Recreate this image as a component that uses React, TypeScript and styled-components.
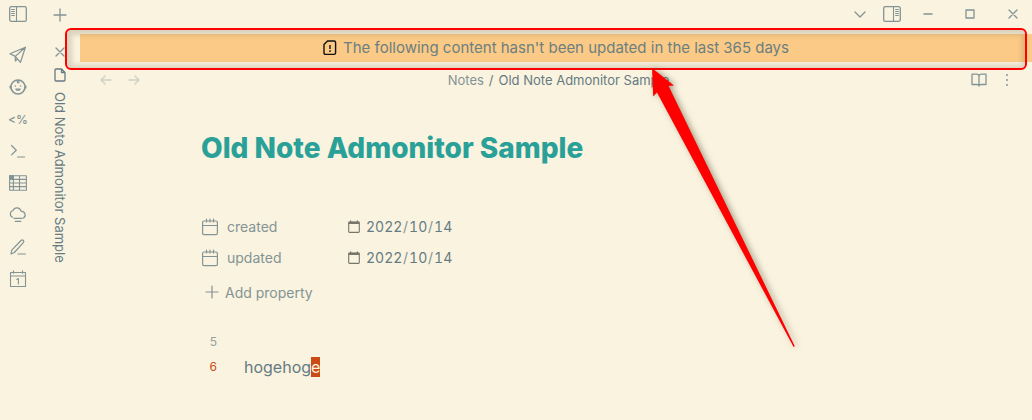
import React from 'react';
import styled, { createGlobalStyle } from 'styled-components';

const GlobalStyle = createGlobalStyle`
  * { box-sizing: border-box; }
  body {
    margin: 0;
    background: #faf3df;
    color: #657b83;
    font-family: Inter, "Liberation Sans", sans-serif;
    font-size: 14px;
  }
`;

const Workspace = styled.div`
  position: relative;
  display: flex;
  min-height: 100vh;
  overflow: hidden;
`;

const Ribbon = styled.aside`
  display: flex;
  flex-direction: column;
  width: 36px;
  flex: none;
`;

const RibbonActions = styled.nav`
  display: flex;
  flex-direction: column;
  padding-top: 11px;
`;

const IconButton = styled.button<{ $w?: number; $h?: number; $faint?: boolean }>`
  display: flex;
  align-items: center;
  justify-content: center;
  flex: none;
  width: ${(p) => p.$w ?? 36}px;
  height: ${(p) => p.$h ?? 32}px;
  padding: 0;
  border: 0;
  background: none;
  color: ${(p) => (p.$faint ? '#d0d0c2' : '#839496')};
  font: 500 12px Inter, "Liberation Sans", sans-serif;
`;

const TabRail = styled.div`
  display: flex;
  flex-direction: column;
  align-items: center;
  flex: none;
  width: 24px;
  margin: 0 8px 0 12px;
`;

const VerticalTab = styled.div`
  display: flex;
  flex-direction: column;
  align-items: center;
  gap: 4px;
  padding-top: 10px;
`;

const VerticalLabel = styled.span`
  writing-mode: vertical-rl;
  font-size: 13px;
  line-height: 16px;
  padding-top: 6px;
  white-space: nowrap;
`;

const Main = styled.main`
  flex: 1;
  min-width: 0;
`;

const WindowBar = styled.header`
  display: flex;
  justify-content: flex-end;
  height: 28px;
`;

const Banner = styled.div`
  display: flex;
  align-items: center;
  justify-content: center;
  gap: 6px;
  height: 28px;
  margin-top: 6px;
  background: #fbca86;
  font-size: 15px;
  line-height: 28px;
  color: #6b7f80;
`;

const ViewHeader = styled.div`
  display: flex;
  align-items: center;
  height: 36px;
  padding: 0 11px 0 12px;
`;

const HeaderSide = styled.div<{ $end?: boolean }>`
  display: flex;
  width: ${(p) => (p.$end ? 68 : 72)}px;
  justify-content: ${(p) => (p.$end ? 'flex-end' : 'flex-start')};
`;

const Breadcrumbs = styled.nav`
  display: flex;
  flex: 1;
  justify-content: center;
  gap: 5px;
  font-size: 13px;
  line-height: 20px;
`;

const Crumb = styled.a`
  color: #839496;
  text-decoration: none;
`;

const Note = styled.article`
  padding: 30px 24px 24px 121px;
`;

const Title = styled.h1`
  margin: 0 0 43px;
  color: #2aa198;
  font-size: 28px;
  line-height: 40px;
  font-weight: 800;
`;

const Property = styled.div`
  display: flex;
  align-items: center;
  height: 31px;
`;

const PropertyName = styled.label`
  display: flex;
  align-items: center;
  gap: 8px;
  width: 147px;
  color: #839496;
`;

const DateField = styled.div`
  display: flex;
  align-items: center;
  color: #839496;
`;

const DatePart = styled.input<{ $w: number }>`
  width: ${(p) => p.$w}px;
  padding: 0 1px;
  border: 0;
  background: none;
  color: #657b83;
  font: 14px Inter, "Liberation Sans", sans-serif;
  font-variant-numeric: tabular-nums;
`;

const DateIcon = styled.svg`
  margin-right: 5px;
`;

const AddProperty = styled.button`
  display: flex;
  align-items: center;
  gap: 6px;
  height: 24px;
  margin: 7px 0 25px;
  padding: 0 4px;
  border: 0;
  background: none;
  color: #839496;
  font: 14px Inter, "Liberation Sans", sans-serif;
`;

const Line = styled.div`
  display: flex;
  align-items: center;
  height: 25px;
  font-size: 16px;
  line-height: 20px;
`;

const LineNumber = styled.span<{ $active?: boolean }>`
  width: 16px;
  margin-right: 27px;
  text-align: right;
  font-size: 12px;
  color: ${(p) => (p.$active ? '#cb4b16' : '#93a1a1')};
`;

const Cursor = styled.span`
  background: #cb4b16;
  color: #faf3df;
`;

const Highlight = styled.div`
  position: absolute;
  top: 28px;
  left: 65px;
  right: 5px;
  height: 42px;
  border: 2px solid #ff0000;
  border-radius: 6px;
  box-shadow: inset 1px 1px 5px 4px rgba(90, 85, 60, 0.2);
  pointer-events: none;
`;

const Arrow = styled.svg`
  position: absolute;
  top: 60px;
  left: 640px;
  pointer-events: none;
  filter: drop-shadow(2px 0 3px rgba(80, 75, 50, 0.5));
`;

type GlyphProps = { w?: number; h?: number; sw?: number; children: React.ReactNode };

const Glyph = ({ w = 18, h = 18, sw = 1.3, children }: GlyphProps) => (
  <svg width={w} height={h} viewBox={`0 0 ${w} ${h}`} fill="none" stroke="currentColor"
    strokeWidth={sw} strokeLinecap="round" strokeLinejoin="round" aria-hidden="true">
    {children}
  </svg>
);

const SidebarGlyph = ({ right }: { right?: boolean }) => (
  <Glyph>
    <g transform={right ? 'matrix(-1 0 0 1 18 0)' : undefined}>
      <rect x="0.7" y="1.7" width="16.6" height="14.6" rx="1.6" />
      <path d="M7.5 2v14M2.6 4.500h2.800M2.600 6.500h2.800M2.600 8.500h2.800M2.600 10.500h2.800" strokeWidth="1.1" />
    </g>
  </Glyph>
);

const CalendarGlyph = () => (
  <Glyph sw={1.2}>
    <rect x="1.6" y="3" width="14.8" height="13.6" rx="1.4" />
    <path d="M1.6 7.5h14.8M5.5 1v3M9 1v3M12.5 1v3" />
  </Glyph>
);

const DateProperty = ({ name }: { name: string }) => (
  <Property>
    <PropertyName htmlFor={`${name}-year`}><CalendarGlyph />{name}</PropertyName>
    <DateField>
      <DateIcon width="12" height="14" viewBox="0 0 12 14" fill="none" stroke="#77766a" aria-hidden="true">
        <rect x="0.7" y="2" width="10.6" height="10.4" rx="0.8" strokeWidth="1.1" />
        <path d="M0.7 2.9h10.6" strokeWidth="2.2" />
        <path d="M2.6 0.6v2M9.4 0.6v2" strokeWidth="1.2" />
      </DateIcon>
      <DatePart id={`${name}-year`} $w={38} defaultValue="2022" />/
      <DatePart aria-label={`${name} month`} $w={20} defaultValue="10" />/
      <DatePart aria-label={`${name} day`} $w={20} defaultValue="14" />
    </DateField>
  </Property>
);

export default function App() {
  return (
    <Workspace>
      <GlobalStyle />
      <Ribbon>
        <IconButton $h={28} aria-label="Toggle left sidebar"><SidebarGlyph /></IconButton>
        <RibbonActions aria-label="Ribbon">
          <IconButton aria-label="Quick switcher">
            <Glyph sw={1.2}><path d="M16.4 1.2 1 7.7l5.3 2.7 5.2 5.900zM16.400 1.200 6.300 10.400v4.600l2.200-2.200" /></Glyph>
          </IconButton>
          <IconButton aria-label="Baby">
            <Glyph>
              <circle cx="9" cy="9" r="7" strokeWidth="1.6" />
              <path d="M9.600 2.300C8 2.600 7.800 4.800 9.200 4.900c1 0 1.200-1 .5-1.400" strokeWidth="1.1" />
              <path d="M6.800 11c.6 1.800 3.800 1.800 4.400 0z" strokeWidth="1.1" />
              <path d="M6.300 7.900v.2M11.700 7.900v.2" strokeWidth="1.5" />
              <path d="M1.300 8v2M16.700 8v2" strokeWidth="1.500" />
            </Glyph>
          </IconButton>
          <IconButton aria-label="Templates">&lt;%</IconButton>
          <IconButton aria-label="Command palette">
            <Glyph sw={1.2}><path d="m2.500 3.500 4.800 4.700-4.800 4.700M8.600 15h7" /></Glyph>
          </IconButton>
          <IconButton aria-label="Table">
            <Glyph sw={1.1}>
              <path d="M.6 1.8h16.8v14.4H.6zM.6 5.4h16.8M.6 9h16.8M.6 12.6h16.8M4.4 1.8v14.4M10.5 1.8v14.4" />
              <path d="M.6 1.8h3.8v3.6H.6z" fill="currentColor" />
            </Glyph>
          </IconButton>
          <IconButton aria-label="Cloud">
            <Glyph sw={1.2}><path d="M3.600 11.200C.2 9.800 1 5 4 4.500 5.500.8 11 .9 12 5.100c4.400.1 5.700 5.500 2 7.100M5 12.300h7.700M6.300 15.300h5.600" /></Glyph>
          </IconButton>
          <IconButton aria-label="Edit">
            <Glyph sw={1.2}><path d="m2 16 .8-3.8L12 2.5c1.6-1.4 3.8.5 2.3 2.2L5.400 14.500zM9 16h7.400" /></Glyph>
          </IconButton>
          <IconButton aria-label="Open today">
            <Glyph sw={1.1}>
              <path d="M1.500 2.500h15v14h-15zM1.500 6h15M4.500.8v2.500M13.500.8v2.500" />
              <path d="m7.800 9.500 1.600-1v5.500" />
            </Glyph>
          </IconButton>
        </RibbonActions>
      </Ribbon>

      <TabRail>
        <IconButton $w={24} $h={30} aria-label="New tab">
          <Glyph w={14} h={14}><path d="M7 1v12M1 7h12" /></Glyph>
        </IconButton>
        <VerticalTab>
          <IconButton $w={24} $h={24} aria-label="Close tab">
            <Glyph w={12} h={12}><path d="m2 2 8 8M10 2l-8 8" /></Glyph>
          </IconButton>
          <Glyph w={12} h={14}><path d="M1 2q0-1 1-1h5.500L11 4.500V12q0 1-1 1H2q-1 0-1-1zM7.500 1v3.500H11" /></Glyph>
          <VerticalLabel>Old Note Admonitor Sample</VerticalLabel>
        </VerticalTab>
      </TabRail>

      <Main>
        <WindowBar>
          <IconButton $w={28} $h={28} aria-label="Tab list">
            <Glyph w={12} h={12}><path d="m1 4 5 5 5-5" /></Glyph>
          </IconButton>
          <IconButton $w={36} $h={28} aria-label="Toggle right sidebar"><SidebarGlyph right /></IconButton>
          <IconButton $w={36} $h={28} aria-label="Minimize">
            <Glyph w={10} h={10}><path d="M1 5h8" /></Glyph>
          </IconButton>
          <IconButton $w={48} $h={28} aria-label="Maximize">
            <Glyph w={10} h={10}><rect x="1" y="1" width="8" height="8" /></Glyph>
          </IconButton>
          <IconButton $w={38} $h={28} aria-label="Close window">
            <Glyph w={10} h={10}><path d="m1 1 8 8M9 1 1 9" /></Glyph>
          </IconButton>
        </WindowBar>

        <Banner role="status">
          <svg width="14" height="16" viewBox="0 0 14 16" fill="none" stroke="#111" strokeWidth="1.4" strokeLinejoin="round" aria-hidden="true">
            <path d="M4.500 1H11q1.600 0 1.600 1.600v10.200q0 1.600-1.600 1.600H2.600Q1 14.400 1 12.800V4.500z" />
            <path d="M7 5v4M7 10.300v1.600" />
          </svg>
          The following content hasn't been updated in the last 365 days
        </Banner>

        <ViewHeader>
          <HeaderSide>
            <IconButton $w={28} $h={28} $faint aria-label="Back">
              <Glyph w={12} h={12}><path d="M11 6H1M5 2 1 6l4 4" /></Glyph>
            </IconButton>
            <IconButton $w={28} $h={28} $faint aria-label="Forward">
              <Glyph w={12} h={12}><path d="M1 6h10M7 2l4 4-4 4" /></Glyph>
            </IconButton>
          </HeaderSide>
          <Breadcrumbs aria-label="Breadcrumbs">
            <Crumb href="#notes">Notes</Crumb>
            <span>/</span>
            <span>Old Note Admonitor Sample</span>
          </Breadcrumbs>
          <HeaderSide $end>
            <IconButton $w={28} $h={28} aria-label="Reading view">
              <Glyph w={16} h={14}><path d="M8 13V3Q7.500 1.200 5.500 1.200H1v10.300h5q2 0 2 1.500 0-1.500 2-1.500h5V1.200h-4.500Q8.500 1.200 8 3" /></Glyph>
            </IconButton>
            <IconButton $w={28} $h={28} aria-label="More options">
              <Glyph w={4} h={14} sw={2}><path d="M2 2v.1M2 7v.1M2 12v.1" /></Glyph>
            </IconButton>
          </HeaderSide>
        </ViewHeader>

        <Note>
          <Title>Old Note Admonitor Sample</Title>
          <DateProperty name="created" />
          <DateProperty name="updated" />
          <AddProperty>
            <Glyph w={14} h={14} sw={1.2}><path d="M7 1v12M1 7h12" /></Glyph>
            Add property
          </AddProperty>
          <Line><LineNumber>5</LineNumber></Line>
          <Line><LineNumber $active>6</LineNumber>hogehog<Cursor>e</Cursor></Line>
        </Note>
      </Main>

      <Highlight />
      <Arrow width="170" height="300" viewBox="0 0 170 300" aria-hidden="true">
        <path d="M12 8 34 25.500 28.600 26 154.800 286.300 153.600 287 17 32.500 13.200 36.600z" fill="#ff0000" />
      </Arrow>
    </Workspace>
  );
}
